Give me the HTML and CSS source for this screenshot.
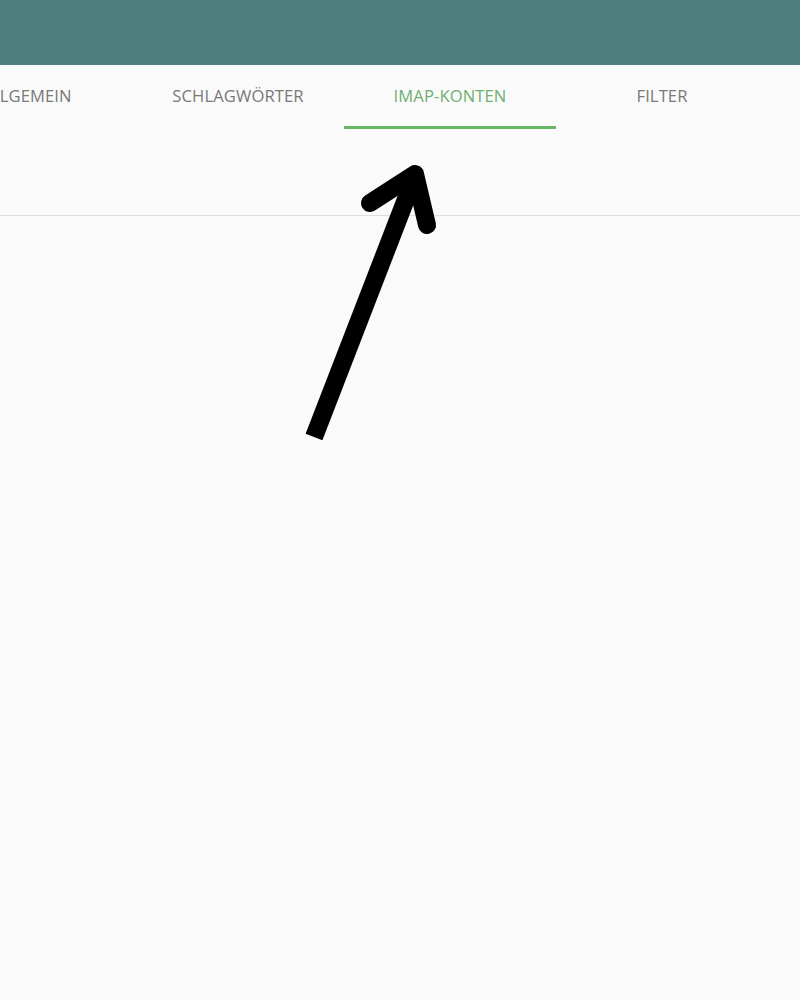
FILE: index.html
```html
<!DOCTYPE html>
<html lang="de">
<head>
<meta charset="utf-8">
<title>Einstellungen</title>
<link rel="stylesheet" href="styles.css">
</head>
<body>
<header class="topbar"></header>
<nav class="tabs">
  <div class="tab">ALLGEMEIN</div>
  <div class="tab">SCHLAGWÖRTER</div>
  <div class="tab active">IMAP-KONTEN</div>
  <div class="tab">FILTER</div>
</nav>
<section class="toolbar"></section>
<svg class="arrow" width="800" height="1000" viewBox="0 0 800 1000">
  <line x1="314" y1="437" x2="413" y2="181" stroke="#000" stroke-width="18" stroke-linecap="butt"/>
  <polyline points="370,203 415,174 427,225" fill="none" stroke="#000" stroke-width="18" stroke-linecap="round" stroke-linejoin="round"/>
</svg>
</body>
</html>
```
FILE: styles.css
```css
html, body {
  margin: 0;
  padding: 0;
  background: #fafafa;
  font-family: "Open Sans", "Liberation Sans", sans-serif;
}
body {
  position: relative;
  width: 800px;
  height: 1000px;
  overflow: hidden;
}
.topbar {
  height: 65px;
  background: #4f7f7f;
}
.tabs {
  display: flex;
  margin-left: -80px;
  height: 64px;
}
.tab {
  width: 212px;
  flex: none;
  box-sizing: border-box;
  display: flex;
  align-items: center;
  justify-content: center;
  padding-bottom: 1px;
  font-size: 16.6px;
  font-weight: 500;
  color: #787878;
  letter-spacing: 0.1px;
  border-bottom: 3px solid transparent;
}
.tab.active {
  color: #70ae70;
  border-bottom-color: #66b866;
}
.toolbar {
  height: 86px;
  border-bottom: 1px solid #dddddd;
}
.arrow {
  position: absolute;
  left: 0;
  top: 0;
}
```
